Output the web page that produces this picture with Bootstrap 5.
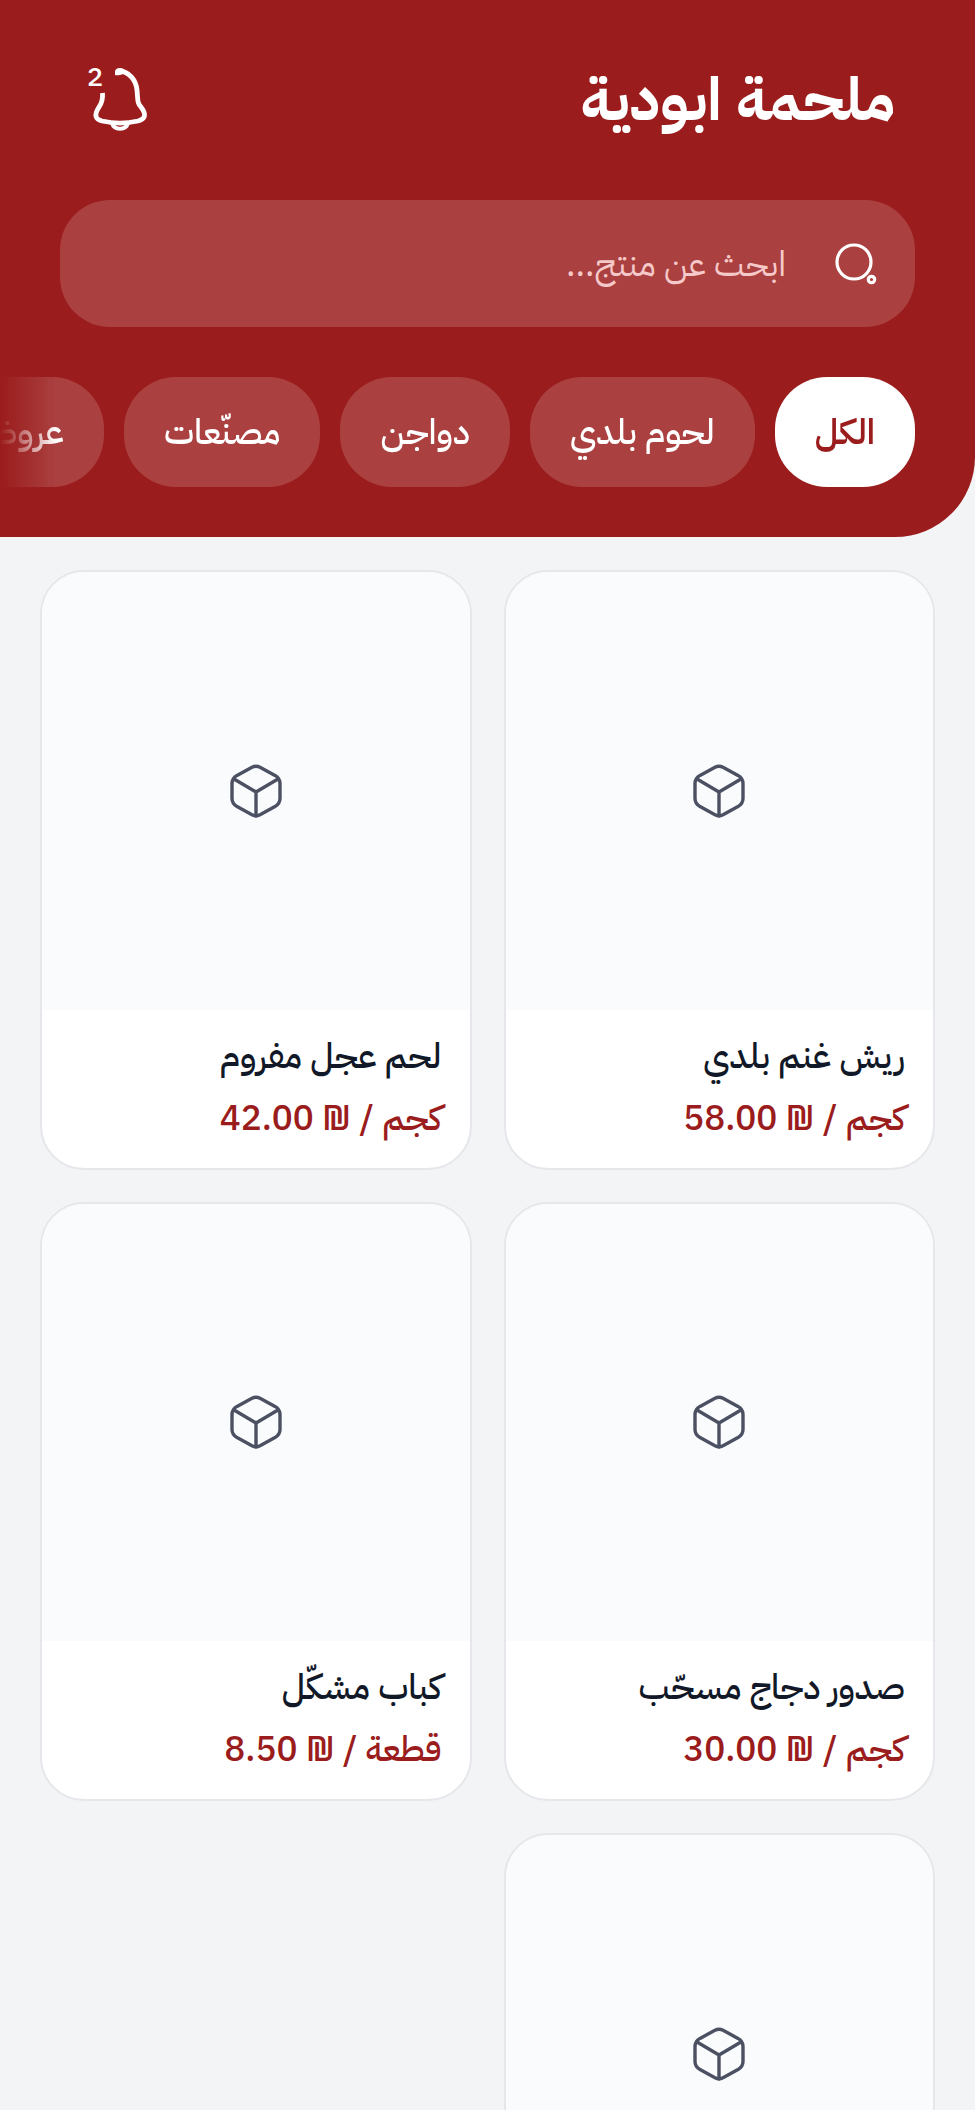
<!DOCTYPE html>
<html lang="ar" dir="rtl">
<head>
<meta charset="utf-8">
<meta name="viewport" content="width=device-width, initial-scale=1">
<title>ملحمة ابودية</title>
<link href="https://cdn.jsdelivr.net/npm/bootstrap@5.3.0/dist/css/bootstrap.min.css" rel="stylesheet">
<style>
  :root { --brand: #9b1c1c; --glass: rgba(255, 255, 255, .16); }
  body { background: #f3f4f6; color: #111827; font-family: "IBM Plex Sans Arabic", "Noto Sans", "DejaVu Sans", sans-serif; overflow-x: hidden; }
  .shop-header { background: var(--brand); border-bottom-right-radius: 80px; padding: 50px 0; }
  .title-row { padding: 0 80px; height: 100px; }
  .shop-title { font-size: 60px; line-height: 100px; }
  .bell-btn { width: 80px; height: 80px; }
  .bell-count, .product-price { font-family: "IBM Plex Sans", "IBM Plex Sans Arabic", "Noto Sans", "DejaVu Sans", sans-serif; font-weight: 500; }
  .bell-count { font-size: 27px; line-height: 28px; top: 2px; left: 7px; }
  .search-wrap { margin: 50px 60px; height: 127px; border-radius: 50px; background: var(--glass); padding: 0 34px; gap: 47px; }
  .search-input, .search-input:focus { background: transparent; color: #fff; font-size: 35px; padding: 4px 0 0; }
  .search-input::placeholder { color: #f5c9c9; opacity: 1; }
  .chip-row { gap: 20px; padding: 0 60px; overflow: hidden; -webkit-mask-image: linear-gradient(to right, transparent, #000 56px); mask-image: linear-gradient(to right, transparent, #000 56px); }
  .chip { --bs-btn-color: #fff; --bs-btn-bg: var(--glass); --bs-btn-hover-color: #fff; --bs-btn-hover-bg: rgba(255, 255, 255, .24);
    --bs-btn-active-color: var(--brand); --bs-btn-active-bg: #fff; --bs-btn-border-width: 0; --bs-btn-border-radius: 52px;
    --bs-btn-padding-x: 40px; --bs-btn-font-size: 35px; height: 110px; padding-top: 8px; font-weight: 500; white-space: nowrap; }
  .chip.active { font-weight: 600; }
  .product-grid { padding: 33px 40px; gap: 32px; display: grid; grid-template-columns: 1fr 1fr; }
  .product { --bs-card-border-color: #e5e7eb; --bs-card-border-width: 2px; --bs-card-border-radius: 44px; --bs-card-inner-border-radius: 42px; overflow: hidden; }
  .product-photo { background: #fafbfd; aspect-ratio: 427 / 437; }
  .product-info { padding: 17px 28px 21px; }
  .product-name, .product-price { font-size: 35px; line-height: 60px; }
  .product-name { font-weight: 500; }
  .product-price { color: var(--brand); }
</style>
</head>
<body>
<svg class="d-none" aria-hidden="true">
  <symbol id="cube" viewBox="0 0 52 54"><g fill="none" stroke="#4b5163" stroke-width="3.4" stroke-linejoin="round" stroke-linecap="round"><path d="M22 3.200Q26 1.200 30 3.200L45 11.400Q50 14.300 50 19.500V34.500Q50 39.600 45 42.600L30 50.800Q26 52.800 22 50.800L7 42.600Q2 39.600 2 34.500V19.500Q2 14.300 7 11.400Z"/><path d="M4 15 26 28 48 15M26 28V52"/></g></symbol>
</svg>

<header class="shop-header">
  <div class="title-row d-flex align-items-center justify-content-between">
    <h1 class="shop-title fw-bold text-white m-0">ملحمة ابودية</h1>
    <button type="button" class="bell-btn btn border-0 p-0 position-relative text-white" aria-label="الإشعارات">
      <svg class="d-block" width="80" height="80" viewBox="10 10 80 80" fill="none" stroke="#fff" stroke-width="4.800" stroke-linejoin="round"><path d="M48 21C60 21 66 31 67 40C68 50 67 53 71 57C77 65 75 69 68 71C57 73.500 43 73.500 32 71C25 69 24 65 29 57C32 53 33 50 32.500 43"/><path d="M45 21Q46 18 50 18Q54 18 57 22L53 24Q49 26 45 25Z" fill="#fff" stroke="none"/><path d="M42 73C44 80.500 56 80.500 58 73" stroke-width="4"/></svg>
      <span class="bell-count position-absolute">2</span>
    </button>
  </div>

  <div class="search-wrap d-flex align-items-center" role="search">
    <label for="q" class="d-flex"><svg width="48" height="48" viewBox="0 0 48 48" fill="none" stroke="#fff" stroke-width="3.200" role="img" aria-label="بحث"><circle cx="21" cy="22" r="17"/><circle cx="38.500" cy="39.500" r="3.200"/></svg></label>
    <input id="q" type="search" class="search-input form-control border-0 shadow-none" placeholder="ابحث عن منتج...">
  </div>

  <nav class="chip-row d-flex" aria-label="التصنيفات">
    <button type="button" class="chip btn active flex-shrink-0" aria-pressed="true">الكل</button>
    <button type="button" class="chip btn flex-shrink-0">لحوم بلدي</button>
    <button type="button" class="chip btn flex-shrink-0">دواجن</button>
    <button type="button" class="chip btn flex-shrink-0">مصنّعات</button>
    <button type="button" class="chip btn flex-shrink-0">عروض</button>
  </nav>
</header>

<main class="product-grid">
  <article class="product card">
    <div class="product-photo d-flex align-items-center justify-content-center"><svg width="54" height="54"><use href="#cube"/></svg></div>
    <div class="product-info"><h2 class="product-name m-0">ريش غنم بلدي</h2><p class="product-price m-0"><bdi dir="ltr">58.00 ₪ / كجم</bdi></p></div>
  </article>
  <article class="product card">
    <div class="product-photo d-flex align-items-center justify-content-center"><svg width="54" height="54"><use href="#cube"/></svg></div>
    <div class="product-info"><h2 class="product-name m-0">لحم عجل مفروم</h2><p class="product-price m-0"><bdi dir="ltr">42.00 ₪ / كجم</bdi></p></div>
  </article>
  <article class="product card">
    <div class="product-photo d-flex align-items-center justify-content-center"><svg width="54" height="54"><use href="#cube"/></svg></div>
    <div class="product-info"><h2 class="product-name m-0">صدور دجاج مسحّب</h2><p class="product-price m-0"><bdi dir="ltr">30.00 ₪ / كجم</bdi></p></div>
  </article>
  <article class="product card">
    <div class="product-photo d-flex align-items-center justify-content-center"><svg width="54" height="54"><use href="#cube"/></svg></div>
    <div class="product-info"><h2 class="product-name m-0">كباب مشكّل</h2><p class="product-price m-0"><bdi dir="ltr">8.50 ₪ / قطعة</bdi></p></div>
  </article>
  <article class="product card">
    <div class="product-photo d-flex align-items-center justify-content-center"><svg width="54" height="54"><use href="#cube"/></svg></div>
  </article>
</main>
<script src="https://cdn.jsdelivr.net/npm/bootstrap@5.3.0/dist/js/bootstrap.bundle.min.js"></script>
</body>
</html>
